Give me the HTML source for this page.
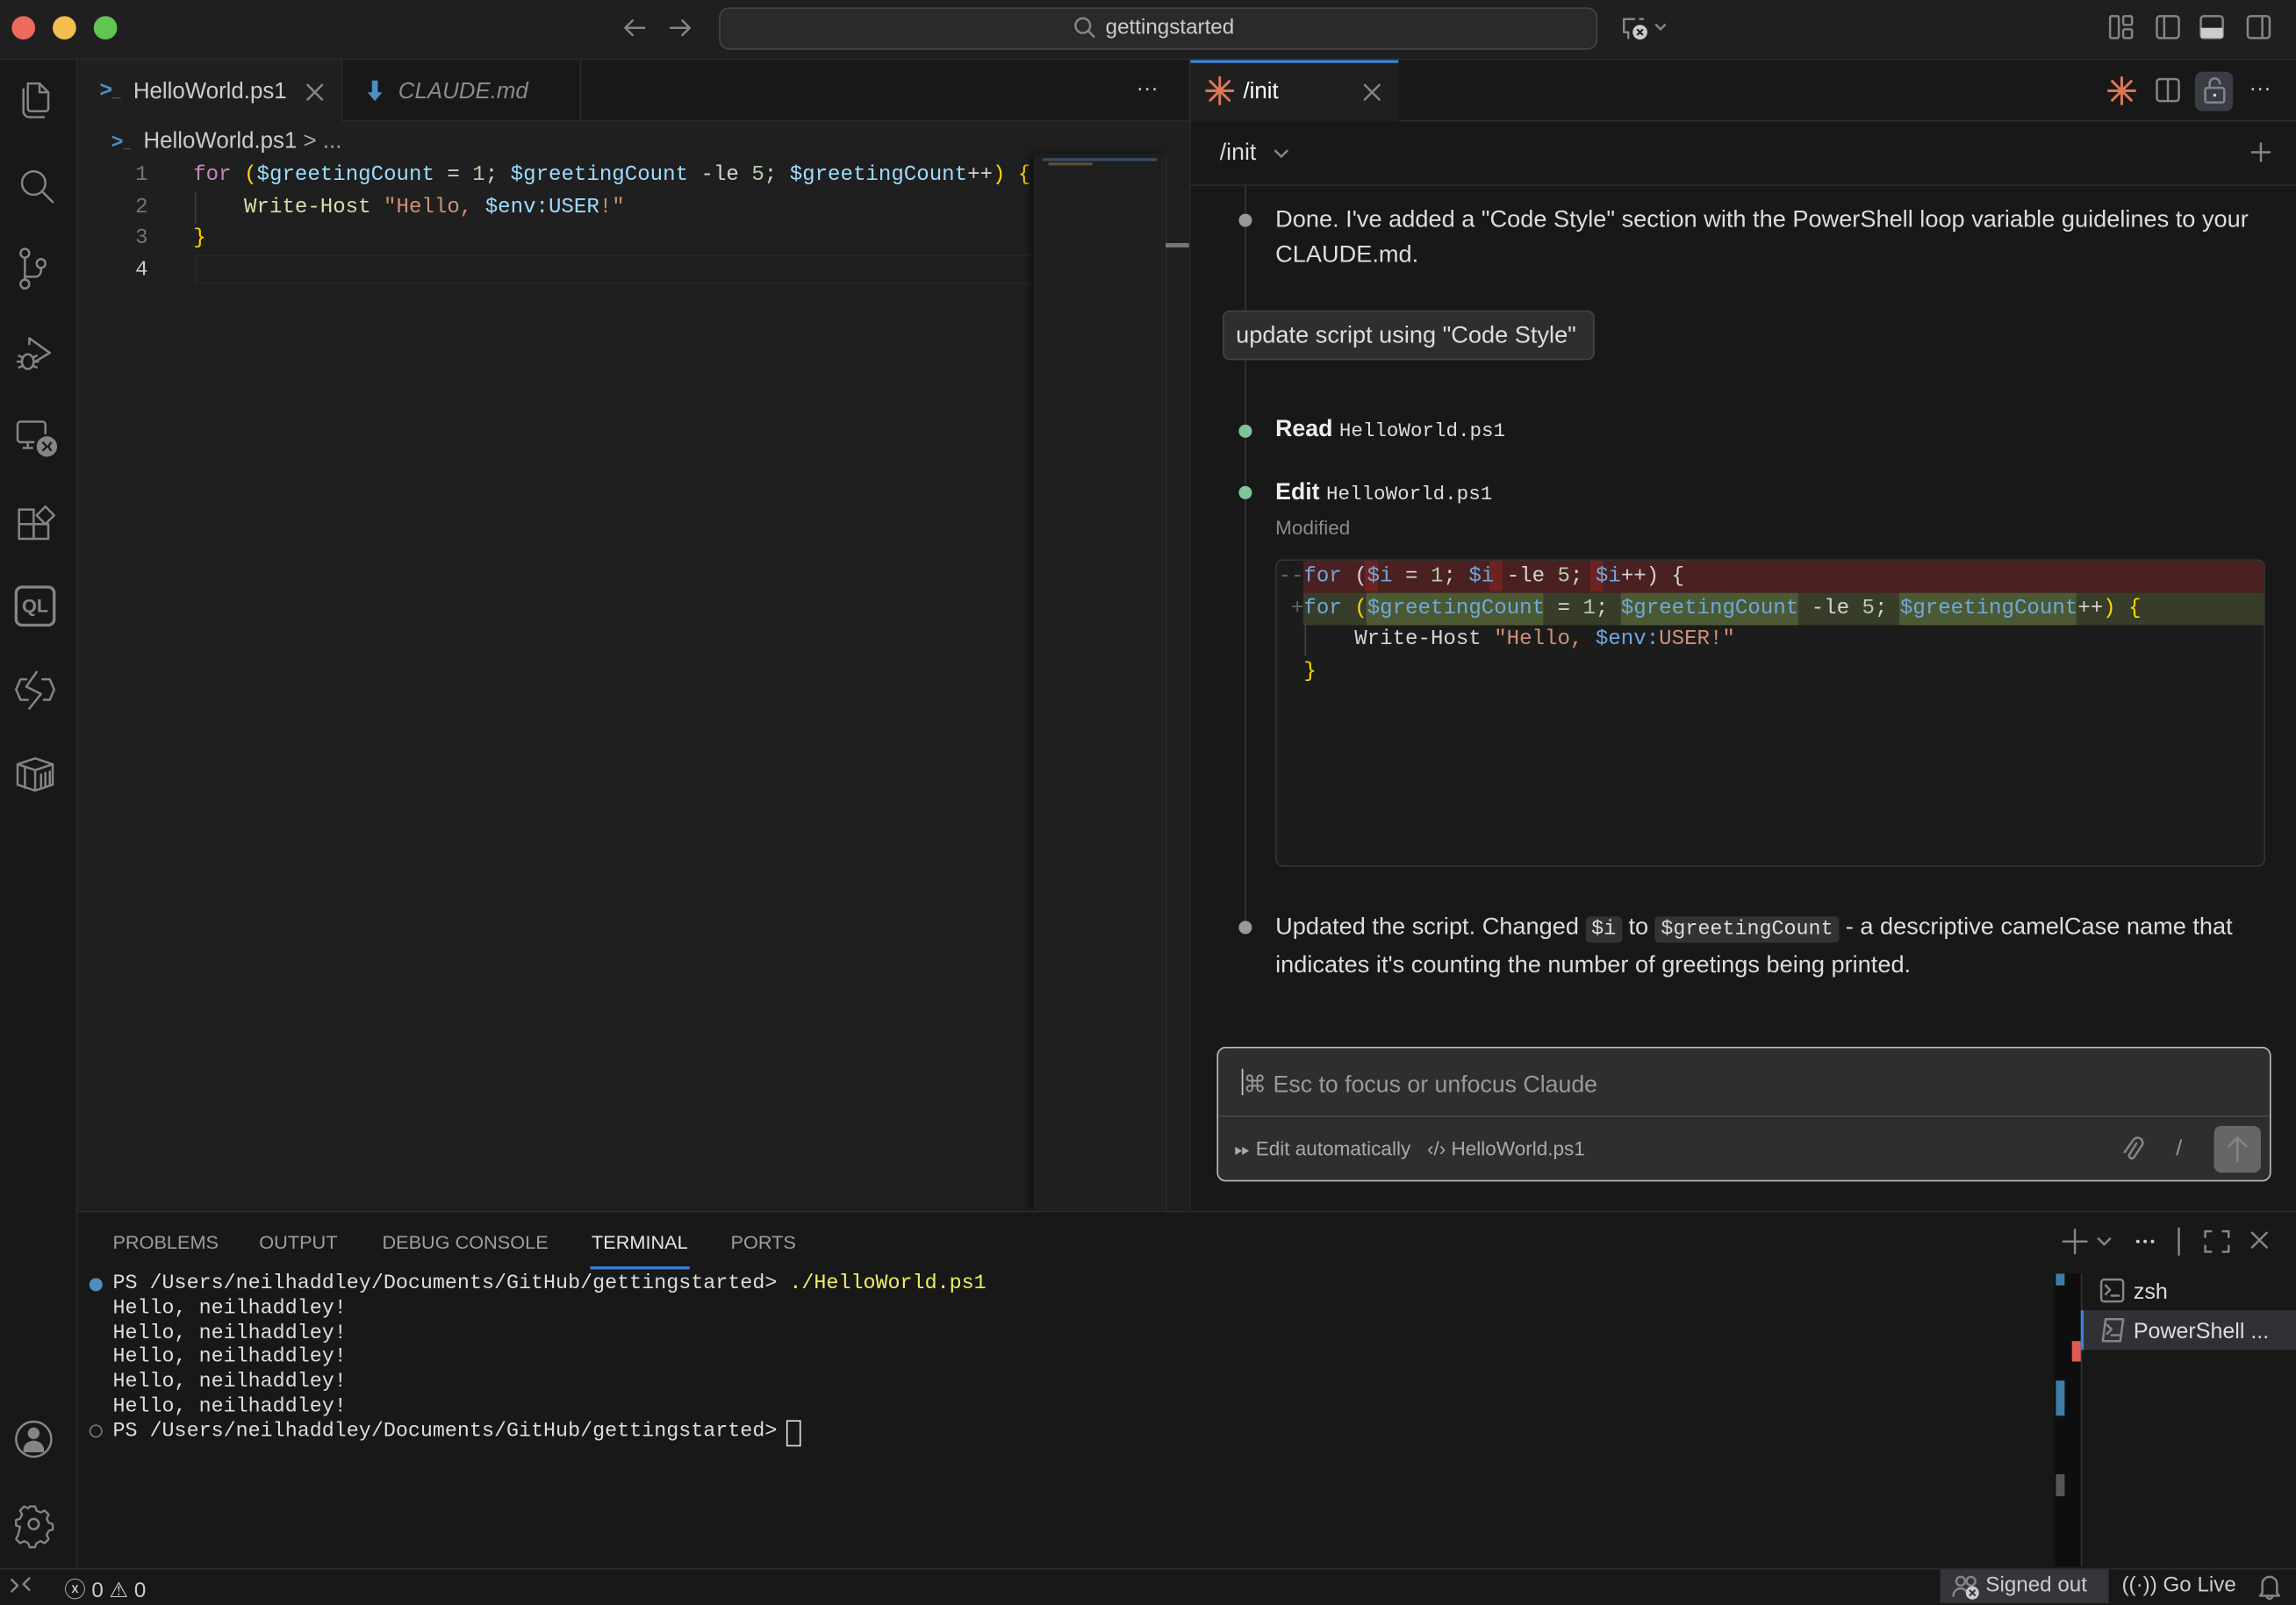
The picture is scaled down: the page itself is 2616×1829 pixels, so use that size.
<!DOCTYPE html>
<html><head><meta charset="utf-8">
<style>
html,body{margin:0;padding:0;background:#181818;overflow:hidden;width:2616px;height:1826px}
#w{position:absolute;left:0;top:0;width:1568px;height:1095px;transform:scale(1.66837);transform-origin:0 0;background:#181818;font-family:"Liberation Sans",sans-serif;color:#ccc}
.a{position:absolute}
.mono{font-family:"Liberation Mono","DejaVu Sans Mono",monospace}
svg{position:absolute;overflow:visible}
.ic{fill:none;stroke:#858585;stroke-width:1.5;stroke-linecap:round;stroke-linejoin:round}
.kw{color:#569cd6}.var{color:#9cdcfe}.num{color:#b5cea8}.str{color:#ce9178}.br{color:#ffd700}.fn{color:#dcdcaa}.pl{color:#d4d4d4}
.k2{color:#6fa8dc}
.pt{position:absolute;top:841px;font-size:13px;color:#9d9d9d}
</style></head><body><div id="w">
<!-- title bar -->
<div class="a" style="left:0;top:0;width:1568px;height:40px;background:#1f1f1f;border-bottom:1px solid #2b2b2b"></div>
<div class="a" style="left:8px;top:11px;width:16px;height:16px;border-radius:50%;background:#ed6a5e"></div>
<div class="a" style="left:36px;top:11px;width:16px;height:16px;border-radius:50%;background:#f5bf4f"></div>
<div class="a" style="left:64px;top:11px;width:16px;height:16px;border-radius:50%;background:#61c554"></div>
<svg style="left:425px;top:11px" width="50" height="16"><path class="ic" stroke="#ccc" d="M2 8h13M7 3L2 8l5 5M33 8h13M41 3l5 5-5 5"/></svg>
<div class="a" style="left:491px;top:5px;width:598px;height:27px;background:#2a2a2a;border:1px solid #444;border-radius:7px"></div>
<svg style="left:733px;top:11px" width="16" height="16"><circle class="ic" stroke="#ccc" cx="6.5" cy="6.5" r="5"/><path class="ic" stroke="#ccc" d="M10 10l4 4"/></svg>
<div class="a" style="left:755px;top:11px;font-size:14.5px;color:#ccc">gettingstarted</div>
<svg style="left:1106px;top:10px" width="36" height="20"><path class="ic" stroke="#ccc" d="M10 3H3v9h3v4M14 3h2"/><circle cx="14" cy="12" r="5" fill="#ccc"/><path d="M12 10l4 4M16 10l-4 4" stroke="#1f1f1f" stroke-width="1.3"/><path class="ic" stroke="#ccc" d="M25 7l3 3 3-3"/></svg>
<svg style="left:1440px;top:10px" width="120" height="18"><g class="ic" stroke="#ccc"><rect x="1" y="1" width="6" height="15" rx="1"/><rect x="10" y="1" width="6" height="6" rx="1"/><rect x="10" y="10" width="6" height="6" rx="1"/><rect x="33" y="1" width="15" height="15" rx="2"/><path d="M38 1v15M65 1h11a2 2 0 012 2v11a2 2 0 01-2 2H65a2 2 0 01-2-2V3a2 2 0 012-2z"/><rect x="95" y="1" width="15" height="15" rx="2"/><path d="M105 1v15"/></g><rect x="63" y="9" width="15" height="7" fill="#ccc"/></svg>

<!-- activity bar -->
<div class="a" style="left:0;top:41px;width:52px;height:1030px;background:#181818;border-right:1px solid #2b2b2b"></div>
<svg style="left:11px;top:55px" width="30" height="30"><path class="ic" d="M8 2h8l6 6v11a2 2 0 01-2 2H10a2 2 0 01-2-2zM16 2v6h6M5 6v15a4 4 0 004 4h10"/></svg>
<svg style="left:11px;top:113px" width="30" height="30"><circle class="ic" cx="12" cy="12" r="8"/><path class="ic" d="M18 18l7 7"/></svg>
<svg style="left:11px;top:168px" width="30" height="32"><g class="ic"><circle cx="6" cy="5" r="3"/><circle cx="6" cy="26" r="3"/><circle cx="17" cy="12" r="3"/><path d="M6 8v15M6 21h7a4 4 0 004-4v-2"/></g></svg>
<svg style="left:11px;top:228px" width="30" height="30"><g class="ic"><path d="M9 7V3l14 10-10 6"/><ellipse cx="8" cy="19" rx="4" ry="5"/><path d="M2 15l2 1M2 23l2-1M14 15l-2 1M14 23l-2-1M1 19h3M12 19h3"/></g></svg>
<svg style="left:11px;top:286px" width="30" height="30"><g class="ic"><path d="M20 10V4a2 2 0 00-2-2H3a2 2 0 00-2 2v10a2 2 0 002 2h9M8 16v4M5 20h6"/></g><circle cx="21" cy="19" r="7" fill="#858585"/><path d="M18 16l3 3-3 3M24 16l-2 3 2 3" stroke="#181818" stroke-width="1.4" fill="none"/></svg>
<svg style="left:11px;top:343px" width="30" height="30"><g class="ic"><rect x="2" y="5" width="10" height="10"/><rect x="2" y="15" width="10" height="10"/><rect x="12" y="15" width="10" height="10"/><path d="M14 9l6-6 6 6-6 6z"/></g></svg>
<div class="a" style="left:10px;top:400px;width:28px;height:28px;border:2px solid #858585;border-radius:5px;box-sizing:border-box;font-size:13px;font-weight:bold;color:#858585;text-align:center;line-height:24px">QL</div>
<svg style="left:10px;top:457px" width="30" height="30"><g class="ic"><path d="M8 7H4l-3 7 3 7h5M19 7h5l3 7-3 7h-4M15 2L8 12l10 5-8 10"/></g></svg>
<svg style="left:10px;top:515px" width="30" height="30"><g class="ic"><path d="M2 7l12-4 12 4v14l-12 4-12-4zM2 7l12 4 12-4M14 11v14M7 10v13M18 14v9M21 13v9M24 12v9"/></g></svg>
<svg style="left:10px;top:970px" width="30" height="30"><circle class="ic" cx="13" cy="13" r="12"/><circle cx="13" cy="9" r="4" fill="#858585"/><path d="M6 20a7 6 0 0114 0v2H6z" fill="#858585"/></svg>
<svg style="left:10px;top:1028px" width="30" height="30"><g class="ic"><circle cx="13" cy="13" r="3.5"/><path d="M11 1h4l1 3 3 1.5 3-1.5 3 3-1.5 3 1.5 3 3 1v4l-3 1-1.5 3 1.5 3-3 3-3-1.5-3 1.5-1 3h-4l-1-3-3-1.5-3 1.5-3-3 1.5-3L4 16l-3-1v-4l3-1 1.5-3L4 4l3-3 3 1.5z" transform="scale(.93)"/></g></svg>

<!-- editor tabs -->
<div class="a" style="left:53px;top:41px;width:759px;height:41px;background:#181818;border-bottom:1px solid #2b2b2b"></div>
<div class="a" style="left:53px;top:41px;width:180px;height:42px;background:#1f1f1f;border-right:1px solid #2b2b2b"></div>
<div class="a" style="left:233px;top:41px;width:163px;height:41px;border-right:1px solid #2b2b2b"></div>
<div class="a" style="left:68px;top:53px;font-size:15px;color:#4f8fc0;font-weight:bold">&gt;<span style="font-size:10px">_</span></div>
<div class="a" style="left:91px;top:54px;font-size:15.5px;color:#ccc">HelloWorld.ps1</div>
<svg style="left:209px;top:57px" width="12" height="12"><path class="ic" stroke="#aaa" d="M1 1l10 10M11 1L1 11"/></svg>
<svg style="left:250px;top:54px" width="12" height="16"><path d="M4 1h4v8h3l-5 6-5-6h3z" fill="#4f8fc0"/></svg>
<div class="a" style="left:272px;top:54px;font-size:15.5px;color:#8b8b8b;font-style:italic">CLAUDE.md</div>
<div class="a" style="left:776px;top:52px;font-size:15px;color:#ccc">···</div>

<!-- editor -->
<div class="a" style="left:53px;top:83px;width:759px;height:744px;background:#1f1f1f"></div>
<div class="a" style="left:76px;top:88px;font-size:14px;color:#4f8fc0;font-weight:bold">&gt;<span style="font-size:9px">_</span></div>
<div class="a" style="left:98px;top:88px;font-size:15.5px;color:#ccc">HelloWorld.ps1 <span style="color:#aaa">&gt; ...</span></div>
<div class="a" style="left:133px;top:174px;width:573px;height:20px;border:1px solid #282828;box-sizing:border-box"></div>
<div class="a" style="left:133px;top:131px;width:1px;height:22px;background:#404040"></div>
<div class="a mono" style="left:80px;top:110px;font-size:14.4px;line-height:21.7px;color:#6e7681;text-align:right;width:21px">1<br>2<br>3<br><span style="color:#ccc">4</span></div>
<div class="a mono" style="left:132px;top:110px;font-size:14.45px;line-height:21.7px;white-space:pre"><span style="color:#c586c0">for</span> <span class="br">(</span><span class="var">$greetingCount</span><span class="pl"> = </span><span class="num">1</span><span class="pl">; </span><span class="var">$greetingCount</span><span class="pl"> -le </span><span class="num">5</span><span class="pl">; </span><span class="var">$greetingCount</span><span class="pl">++</span><span class="br">)</span> <span class="br">{</span>
    <span class="fn">Write-Host</span> <span class="str">"Hello, </span><span class="var">$env:USER</span><span class="str">!"</span>
<span class="br">}</span></div>
<div class="a" style="left:706px;top:105px;width:90px;height:722px;background:#1f1f1f;box-shadow:-3px 0 5px #111"></div>
<div class="a" style="left:712px;top:108px;width:78px;height:2px;background:#4a6b8a;opacity:.6"></div>
<div class="a" style="left:716px;top:111px;width:30px;height:2px;background:#7a6e55;opacity:.6"></div>
<div class="a" style="left:796px;top:105px;width:16px;height:722px;border-left:1px solid #2b2b2b"></div>
<div class="a" style="left:796px;top:166px;width:16px;height:3px;background:#777"></div>

<!-- right panel -->
<div class="a" style="left:812px;top:41px;width:1px;height:786px;background:#2b2b2b"></div>
<div class="a" style="left:813px;top:41px;width:755px;height:41px;border-bottom:1px solid #2b2b2b"></div>
<div class="a" style="left:813px;top:41px;width:142px;height:42px;background:#1f1f1f;border-top:2px solid #3b82d6;box-sizing:border-box"></div>
<svg style="left:823px;top:52px" width="20" height="20"><g stroke="#d97757" stroke-width="1.8" stroke-linecap="round"><path d="M10 1v18M1 10h18M3.5 3.5l13 13M16.5 3.5l-13 13"/></g></svg>
<div class="a" style="left:849px;top:54px;font-size:15.5px;color:#fff">/init</div>
<svg style="left:931px;top:57px" width="12" height="12"><path class="ic" stroke="#eee" d="M1 1l10 10M11 1L1 11"/></svg>
<svg style="left:1439px;top:52px" width="20" height="20"><g stroke="#d97757" stroke-width="1.8" stroke-linecap="round"><path d="M10 1v18M1 10h18M3.5 3.5l13 13M16.5 3.5l-13 13"/></g></svg>
<svg style="left:1472px;top:53px" width="18" height="18"><g class="ic" stroke="#ccc"><rect x="1" y="1" width="15" height="15" rx="2"/><path d="M8.5 1v15"/></g></svg>
<div class="a" style="left:1499px;top:49px;width:26px;height:27px;background:#3a3d45;border-radius:5px"></div>
<svg style="left:1505px;top:52px" width="16" height="20"><g class="ic" stroke="#ddd"><rect x="1" y="8" width="13" height="10" rx="1.5"/><path d="M4 8V5a3.5 3.5 0 017 0"/></g><circle cx="7.5" cy="13" r="1" fill="#ddd"/></svg>
<div class="a" style="left:1536px;top:52px;font-size:15px;color:#ccc">···</div>

<div class="a" style="left:833px;top:96px;font-size:16px;color:#ddd">/init</div>
<svg style="left:869px;top:101px" width="12" height="10"><path class="ic" stroke="#ccc" d="M2 2l4 4 4-4"/></svg>
<svg style="left:1537px;top:97px" width="14" height="14"><path class="ic" stroke="#aaa" d="M7 1v12M1 7h12"/></svg>
<div class="a" style="left:813px;top:126px;width:755px;height:1px;background:#2b2b2b"></div>

<!-- timeline -->
<div class="a" style="left:850px;top:127px;width:1px;height:510px;background:#333"></div>
<div class="a" style="left:846px;top:146px;width:9px;height:9px;border-radius:50%;background:#999"></div>
<div class="a" style="left:871px;top:139px;font-size:16.3px;line-height:23.5px;color:#ddd;width:680px">Done. I've added a "Code Style" section with the PowerShell loop variable guidelines to your CLAUDE.md.</div>
<div class="a" style="left:835px;top:212px;width:254px;height:34px;background:#2e2e2e;border:1px solid #444;border-radius:5px;box-sizing:border-box;font-size:16.3px;color:#ddd;line-height:33px;padding-left:8px">update script using "Code Style"</div>

<div class="a" style="left:846px;top:290px;width:9px;height:9px;border-radius:50%;background:#7ec699"></div>
<div class="a" style="left:871px;top:285px;font-size:16px;color:#eee"><b>Read</b> <span class="mono" style="font-size:13.5px;color:#ddd">HelloWorld.ps1</span></div>
<div class="a" style="left:846px;top:332px;width:9px;height:9px;border-radius:50%;background:#7ec699"></div>
<div class="a" style="left:871px;top:328px;font-size:16px;color:#eee"><b>Edit</b> <span class="mono" style="font-size:13.5px;color:#ddd">HelloWorld.ps1</span></div>
<div class="a" style="left:871px;top:353px;font-size:13.5px;color:#8b8b8b">Modified</div>

<div class="a" style="left:871px;top:382px;width:676px;height:210px;background:#1c1c1c;border:1px solid #333;border-radius:5px;box-sizing:border-box;overflow:hidden">
 <div class="a" style="left:18px;top:0;width:660px;height:22px;background:#4a2020"></div>
 <div class="a" style="left:18px;top:22px;width:660px;height:22px;background:#373d29"></div>
</div>
<div class="a" style="left:932px;top:383px;width:9px;height:21px;background:#6e2222"></div>
<div class="a" style="left:1017px;top:383px;width:9px;height:21px;background:#6e2222"></div>
<div class="a" style="left:1086px;top:383px;width:9px;height:21px;background:#6e2222"></div>
<div class="a" style="left:933px;top:405px;width:121px;height:22px;background:#4b5a33"></div>
<div class="a" style="left:1107px;top:405px;width:121px;height:22px;background:#4b5a33"></div>
<div class="a" style="left:1297px;top:405px;width:121px;height:22px;background:#4b5a33"></div>
<div class="a" style="left:891px;top:426px;width:1px;height:22px;background:#444"></div>
<div class="a mono" style="left:873px;top:384px;font-size:14.45px;line-height:21.7px;white-space:pre;color:#d4d4d4"><span style="color:#666">--</span><span class="k2">for</span> (<span class="k2">$i</span> = <span class="num">1</span>; <span class="k2">$i</span> -le <span class="num">5</span>; <span class="k2">$i</span>++) {
<span style="color:#666"> +</span><span class="k2">for</span> <span class="br">(</span><span class="k2">$greetingCount</span> = <span class="num">1</span>; <span class="k2">$greetingCount</span> -le <span class="num">5</span>; <span class="k2">$greetingCount</span>++<span class="br">)</span> <span class="br">{</span>
      Write-Host <span class="str">"Hello, </span><span class="k2">$env:</span><span class="str">USER!"</span>
  <span class="br">}</span></div>

<div class="a" style="left:846px;top:629px;width:9px;height:9px;border-radius:50%;background:#999"></div>
<div class="a" style="left:871px;top:622px;font-size:16.3px;line-height:23.5px;color:#ddd;width:680px">Updated the script. Changed <span class="mono" style="font-size:14px;background:#333;border-radius:3px;padding:1px 4px">$i</span> to <span class="mono" style="font-size:14px;background:#333;border-radius:3px;padding:1px 4px">$greetingCount</span> - a descriptive camelCase name that indicates it's counting the number of greetings being printed.</div>

<!-- input -->
<div class="a" style="left:831px;top:715px;width:720px;height:92px;background:#2e2e2e;border:1.5px solid #bbb;border-radius:6px;box-sizing:border-box"></div>
<div class="a" style="left:832px;top:762px;width:718px;height:1px;background:#444"></div>
<div class="a" style="left:848px;top:730px;width:1px;height:18px;background:#ccc"></div>
<div class="a" style="left:849px;top:731px;font-size:16px;color:#999">⌘ Esc to focus or unfocus Claude</div>
<div class="a" style="left:843px;top:777px;font-size:13.5px;color:#aaa">⏩︎ Edit automatically &nbsp;&nbsp;‹/› HelloWorld.ps1</div>
<svg style="left:1449px;top:776px" width="14" height="18"><path class="ic" stroke="#999" d="M10 5l-5 8a2 2 0 003 2l6-9a3.5 3.5 0 00-6-3.5L2 11"/></svg>
<div class="a" style="left:1486px;top:776px;font-size:15px;color:#999">/</div>
<div class="a" style="left:1512px;top:769px;width:32px;height:32px;background:#666;border-radius:5px"></div>
<svg style="left:1520px;top:775px" width="16" height="20"><path class="ic" stroke="#ddd" d="M8 18V2M2 8l6-6 6 6"/></svg>

<!-- bottom panel -->
<div class="a" style="left:53px;top:827px;width:1515px;height:1px;background:#2b2b2b"></div>
<div class="pt" style="left:77px">PROBLEMS</div>
<div class="pt" style="left:177px">OUTPUT</div>
<div class="pt" style="left:261px">DEBUG CONSOLE</div>
<div class="pt" style="left:404px;color:#e7e7e7">TERMINAL</div>
<div class="pt" style="left:499px">PORTS</div>
<div class="a" style="left:403px;top:865px;width:68px;height:2px;background:#3b82d6"></div>
<svg style="left:1408px;top:839px" width="140" height="18"><g class="ic" stroke="#ccc"><path d="M9 1v16M1 9h16M25 7l4 4 4-4"/><path d="M80 0v18"/><path d="M98 6V2h4M110 2h4v4M114 12v4h-4M102 16h-4v-4M130 3l10 10M140 3l-10 10"/></g><circle cx="52" cy="9" r="1.2" fill="#ccc"/><circle cx="57" cy="9" r="1.2" fill="#ccc"/><circle cx="62" cy="9" r="1.2" fill="#ccc"/></svg>
<div class="a" style="left:61px;top:873px;width:9px;height:9px;border-radius:50%;background:#4f8fc0"></div>
<div class="a" style="left:61px;top:973px;width:7px;height:7px;border-radius:50%;border:1px solid #777"></div>
<div class="a mono" style="left:77px;top:869px;font-size:14px;line-height:16.8px;white-space:pre;color:#ddd">PS /Users/neilhaddley/Documents/GitHub/gettingstarted&gt; <span style="color:#f0f060">./HelloWorld.ps1</span>
Hello, neilhaddley!
Hello, neilhaddley!
Hello, neilhaddley!
Hello, neilhaddley!
Hello, neilhaddley!
PS /Users/neilhaddley/Documents/GitHub/gettingstarted&gt; </div>
<div class="a" style="left:537px;top:970px;width:8px;height:16px;border:1px solid #ddd"></div>
<div class="a" style="left:1403px;top:870px;width:18px;height:200px;background:#0e0e0e;border-right:1px solid #333"></div>
<div class="a" style="left:1404px;top:870px;width:6px;height:8px;background:#3d7ea8"></div>
<div class="a" style="left:1404px;top:943px;width:6px;height:24px;background:#3d7ea8"></div>
<div class="a" style="left:1404px;top:1007px;width:6px;height:15px;background:#555"></div>
<div class="a" style="left:1415px;top:916px;width:6px;height:14px;background:#e05a55"></div>
<div class="a" style="left:1421px;top:895px;width:147px;height:27px;background:#2f3136;border-left:2px solid #3b82d6;box-sizing:border-box"></div>
<svg style="left:1434px;top:873px" width="18" height="18"><g class="ic" stroke="#ccc"><rect x="1" y="1" width="15" height="15" rx="2"/><path d="M4 5l3 3-3 3M8 12h5"/></g></svg>
<div class="a" style="left:1457px;top:874px;font-size:15px;color:#ddd">zsh</div>
<svg style="left:1434px;top:900px" width="18" height="18"><g class="ic" stroke="#ccc"><path d="M4 1h12l-2 15H2z"/><path d="M5 5l3 3-3 3M8 12h5"/></g></svg>
<div class="a" style="left:1457px;top:901px;font-size:15px;color:#ddd">PowerShell ...</div>

<!-- status bar -->
<div class="a" style="left:0;top:1071px;width:1568px;height:24px;background:#181818;border-top:1px solid #2b2b2b"></div>
<svg style="left:6px;top:1076px" width="16" height="14"><path class="ic" stroke="#ccc" d="M2 3l4 4-4 4M14 2l-4 4 4 4"/></svg>
<div class="a" style="left:44px;top:1075px;font-size:14.5px;color:#ccc">ⓧ 0 ⚠︎ 0</div>
<div class="a" style="left:1325px;top:1072px;width:115px;height:23px;background:#34363b"></div>
<svg style="left:1333px;top:1075px" width="20" height="18"><g class="ic" stroke="#ccc"><circle cx="6" cy="5" r="3"/><circle cx="13" cy="5" r="3"/><path d="M1 15a5 5 0 0110 0"/></g><circle cx="14" cy="13" r="4.5" fill="#ccc"/><path d="M12 11l4 4M16 11l-4 4" stroke="#34363b" stroke-width="1.3"/></svg>
<div class="a" style="left:1356px;top:1075px;font-size:14.5px;color:#ccc">Signed out</div>
<div class="a" style="left:1449px;top:1075px;font-size:14.5px;color:#ccc">((·)) Go Live</div>
<svg style="left:1542px;top:1075px" width="16" height="18"><path class="ic" stroke="#ccc" d="M3 13V7a5 5 0 0110 0v6l1.5 2h-13zM6 15a2 2 0 004 0"/></svg>
</div></body></html>
